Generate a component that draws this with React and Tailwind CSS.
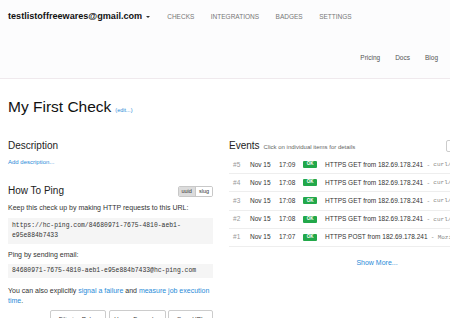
const events = [
  { n: 5, time: '17:09', method: 'HTTPS GET', ua: 'curl/7.55.1' },
  { n: 4, time: '17:08', method: 'HTTPS GET', ua: 'curl/7.55.1' },
  { n: 3, time: '17:08', method: 'HTTPS GET', ua: 'curl/7.55.1' },
  { n: 2, time: '17:08', method: 'HTTPS GET', ua: 'curl/7.55.1' },
  { n: 1, time: '17:07', method: 'HTTPS POST', ua: 'Mozilla/5.0' },
]

function EventRow({ e }) {
  return (
    <div className="flex items-center h-[18.2px] border-b border-[#eeeeee] pl-[4px] text-[6.5px] whitespace-nowrap">
      <span className="w-[17px] text-[#999]">#{e.n}</span>
      <span className="w-[29px] text-[#333]">Nov 15</span>
      <span className="w-[24px] text-[#333]">{e.time}</span>
      <span className="w-[14px] h-[7px] mr-[8px] bg-[#22a84a] text-white font-bold text-[4.5px] flex items-center justify-center rounded-[1px]">OK</span>
      <span className="text-[#333]">{e.method} from 182.69.178.241</span>
      <span className="text-[#999] mx-[4px]">-</span>
      <span className="text-[#888] font-['Liberation_Mono',monospace] text-[6px]">{e.ua}</span>
    </div>
  )
}

export default function App() {
  return (
    <div className="w-[450px] h-[318px] overflow-hidden bg-white font-['Liberation_Sans',Arial,sans-serif] text-[#222]">
      <div className="bg-[#fcfcfd] border-b border-[#efe9ed] h-[79px]">
        <div className="flex items-center h-[34px] pl-[8px] whitespace-nowrap">
          <span className="font-bold text-[9.1px] text-[#111]">testlistoffreewares@gmail.com</span>
          <span className="ml-[4px] mr-[17px] w-0 h-0 border-l-[2px] border-r-[2px] border-t-[2.5px] border-l-transparent border-r-transparent border-t-[#333]" />
          <div className="flex gap-[16.5px] text-[6.5px] text-[#777]">
            <span>CHECKS</span>
            <span>INTEGRATIONS</span>
            <span>BADGES</span>
            <span>SETTINGS</span>
          </div>
        </div>
        <div className="flex items-center justify-end h-[44px] pt-[3px] pr-[12px] gap-[15px] text-[6.5px] text-[#555]">
          <span>Pricing</span>
          <span>Docs</span>
          <span>Blog</span>
        </div>
      </div>

      <div className="px-[8px]">
        <div className="mt-[19px] h-[18px] leading-[18px] whitespace-nowrap">
          <span className="text-[15.5px] text-[#111]">My First Check</span>
          <span className="ml-[4px] text-[5.5px] text-[#2a8bd8]">(edit...)</span>
        </div>

        <div className="flex gap-[16px] items-start">
          <div className="w-[205px] shrink-0">
            <div className="mt-[24px] text-[10px] leading-[12px] text-[#222]">Description</div>
            <div className="mt-[6px] text-[6px] leading-[8px] text-[#2a8bd8]">Add description...</div>

            <div className="mt-[19px] flex items-center justify-between h-[12px]">
              <span className="text-[10px] leading-[12px]">How To Ping</span>
              <div className="flex border border-[#c8c8c8] rounded-[2px] text-[5.5px] h-[11px] overflow-hidden">
                <span className="bg-[#dcdcdc] text-[#333] px-[3px] flex items-center">uuid</span>
                <span className="bg-white text-[#333] px-[3px] flex items-center border-l border-[#c8c8c8]">slug</span>
              </div>
            </div>

            <div className="mt-[6px] text-[7px] leading-[9px] text-[#333]">Keep this check up by making HTTP requests to this URL:</div>
            <div className="mt-[6px] bg-[#f5f5f5] px-[4px] py-[3px] font-['Liberation_Mono',monospace] text-[6.4px] leading-[10px] text-[#333]">
              https://hc-ping.com/84680971-7675-4810-aeb1-
              <br />
              e95e884b7433
            </div>

            <div className="mt-[6px] text-[7px] leading-[9px] text-[#333]">Ping by sending email:</div>
            <div className="mt-[5px] bg-[#f5f5f5] px-[4px] py-[2px] font-['Liberation_Mono',monospace] text-[6.4px] leading-[10px] text-[#333] whitespace-nowrap">
              84680971-7675-4810-aeb1-e95e884b7433@hc-ping.com
            </div>

            <div className="mt-[8px] text-[7px] leading-[9.5px] text-[#333]">
              You can also explicitly <span className="text-[#2a8bd8]">signal a failure</span> and{' '}
              <span className="text-[#2a8bd8]">measure job execution time</span>.
            </div>

            <div className="mt-[4.5px] flex justify-end gap-[2.5px] text-[6px] leading-[8px] text-[#333] whitespace-nowrap">
              <div className="w-[56px] text-center border border-[#ccc] rounded-[2px] h-[18px] pt-[4px]">Filtering Rules</div>
              <div className="w-[57px] text-center border border-[#ccc] rounded-[2px] h-[18px] pt-[4px]">Usage Examples</div>
              <div className="w-[45px] text-center border border-[#ccc] rounded-[2px] h-[18px] pt-[4px]">Copy URL</div>
            </div>
          </div>

          <div className="w-[296px] shrink-0">
            <div className="mt-[24px] flex items-center h-[12px] whitespace-nowrap">
              <span className="text-[10px] leading-[12px]">Events</span>
              <span className="ml-[4px] mt-[2px] text-[6px] text-[#666]">Click on individual items for details</span>
              <div className="ml-auto w-[79px] h-[12px] border border-[#ccc] rounded-[2px]" />
            </div>
            <div className="mt-[4px]">
              {events.map((e) => (
                <EventRow key={e.n} e={e} />
              ))}
            </div>
            <div className="mt-[11px] text-center text-[7px] leading-[9px] text-[#2a8bd8]">Show More...</div>
          </div>
        </div>
      </div>
    </div>
  )
}
